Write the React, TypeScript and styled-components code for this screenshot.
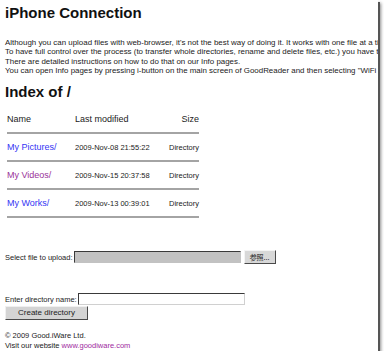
import React from "react";
import styled, { createGlobalStyle } from "styled-components";

const Global = createGlobalStyle`
  html, body { margin: 0; padding: 0; background: #fff; }
  body { font-family: "Liberation Sans", Arial, sans-serif; color: #222; }
`;

const Page = styled.div`
  padding: 0;
`;

const Frame = styled.div`
  width: 378px;
  height: 351px;
  background: #fff;
  overflow: hidden;
  box-shadow: 2px 2px 0 #555, 3px 3px 3px rgba(0, 0, 0, 0.45);
  padding: 4px 0 0 5px;
  box-sizing: border-box;
  display: flex;
  flex-direction: column;
`;

const Title = styled.h1`
  margin: 0;
  font-size: 15px;
  line-height: 17px;
  font-weight: bold;
  color: #111;
  white-space: nowrap;
`;

const Para = styled.p`
  margin: 17px 0 0;
  font-size: 7.92px;
  line-height: 9.3px;
  white-space: nowrap;
  color: #222;
`;

const Heading = styled.h2`
  margin: 8px 0 0;
  font-size: 15px;
  line-height: 17px;
  font-weight: bold;
  color: #111;
`;

const Listing = styled.div`
  margin: 14px 0 0 2px;
  width: 192px;
  display: flex;
  flex-direction: column;
`;

const Row = styled.div<{ $header?: boolean }>`
  display: grid;
  grid-template-columns: 68px 1fr auto;
  height: ${(p) => (p.$header ? "18px" : "26px")};
  align-items: ${(p) => (p.$header ? "start" : "center")};
`;

const HeadCell = styled.span<{ $right?: boolean }>`
  font-size: 9px;
  line-height: 11px;
  color: #222;
  text-align: ${(p) => (p.$right ? "right" : "left")};
`;

const Rule = styled.div`
  height: 2px;
  background: #a4a4a4;
`;

const NameLink = styled.a<{ $visited?: boolean }>`
  font-size: 9px;
  line-height: 11px;
  color: ${(p) => (p.$visited ? "#9a3399" : "#3434f4")};
  text-decoration: none;
`;

const Small = styled.span<{ $right?: boolean }>`
  font-size: 7.5px;
  line-height: 9px;
  color: #222;
  text-align: ${(p) => (p.$right ? "right" : "left")};
`;

const FormRow = styled.div<{ $top: number }>`
  display: flex;
  align-items: center;
  margin-top: ${(p) => p.$top}px;
  height: 14px;
`;

const Label = styled.span`
  font-size: 7.5px;
  line-height: 9px;
  color: #222;
  margin-right: 1px;
  white-space: nowrap;
`;

const FileBox = styled.div`
  width: 167px;
  height: 12px;
  box-sizing: border-box;
  background: #c2c2c2;
  border: 1px solid #c2c2c2;
  border-top-color: #3a3a3a;
  border-left-color: #3a3a3a;
`;

const BrowseButton = styled.button`
  margin-left: 3px;
  width: 32px;
  height: 14px;
  box-sizing: border-box;
  padding: 0;
  background: #d8d8d8;
  border: 1px solid #f4f4f4;
  border-right-color: #4a4a4a;
  border-bottom-color: #4a4a4a;
  font-family: "Noto Sans CJK JP", "Liberation Sans", sans-serif;
  font-size: 7px;
  line-height: 10px;
  color: #222;
`;

const TextBox = styled.div`
  width: 167px;
  height: 12px;
  box-sizing: border-box;
  background: #fff;
  border: 1px solid #d0d0d0;
  border-top-color: #3a3a3a;
  border-left-color: #3a3a3a;
`;

const CreateButton = styled.button`
  width: 83px;
  height: 14px;
  box-sizing: border-box;
  padding: 0;
  background: #d4d4d4;
  border: 1px solid #f0f0f0;
  border-right-color: #4a4a4a;
  border-bottom-color: #4a4a4a;
  font-family: "Liberation Sans", Arial, sans-serif;
  font-size: 8px;
  line-height: 10px;
  color: #222;
  align-self: flex-start;
`;

const Footer = styled.div`
  margin-top: 11px;
  font-size: 7.5px;
  line-height: 10px;
  color: #222;
`;

const FooterLink = styled.a`
  color: #a02aa0;
  text-decoration: none;
`;

const rows = [
  { name: "My Pictures/", date: "2009-Nov-08 21:55:22", visited: false },
  { name: "My Videos/", date: "2009-Nov-15 20:37:58", visited: true },
  { name: "My Works/", date: "2009-Nov-13 00:39:01", visited: false },
];

export default function App() {
  return (
    <Page>
      <Global />
      <Frame>
        <Title>iPhone Connection</Title>
        <Para>
          Although you can upload files with web-browser, it's not the best way of doing it. It works with one file at a time and you can't create directories.
          <br />
          To have full control over the process (to transfer whole directories, rename and delete files, etc.) you have to use one of the WebDAV clients.
          <br />
          There are detailed instructions on how to do that on our Info pages.
          <br />
          You can open Info pages by pressing i-button on the main screen of GoodReader and then selecting "WiFi Transfer".
        </Para>
        <Heading>Index of /</Heading>
        <Listing>
          <Row $header>
            <HeadCell>Name</HeadCell>
            <HeadCell>Last modified</HeadCell>
            <HeadCell $right>Size</HeadCell>
          </Row>
          <Rule />
          {rows.map((r) => (
            <React.Fragment key={r.name}>
              <Row>
                <NameLink href="#" $visited={r.visited}>
                  {r.name}
                </NameLink>
                <Small>{r.date}</Small>
                <Small $right>Directory</Small>
              </Row>
              <Rule />
            </React.Fragment>
          ))}
        </Listing>
        <FormRow $top={32}>
          <Label>Select file to upload:</Label>
          <FileBox />
          <BrowseButton>参照...</BrowseButton>
        </FormRow>
        <FormRow $top={28}>
          <Label>Enter directory name:</Label>
          <TextBox />
        </FormRow>
        <CreateButton>Create directory</CreateButton>
        <Footer>
          © 2009 Good.iWare Ltd.
          <br />
          Visit our website <FooterLink href="#">www.goodiware.com</FooterLink>
        </Footer>
      </Frame>
    </Page>
  );
}
